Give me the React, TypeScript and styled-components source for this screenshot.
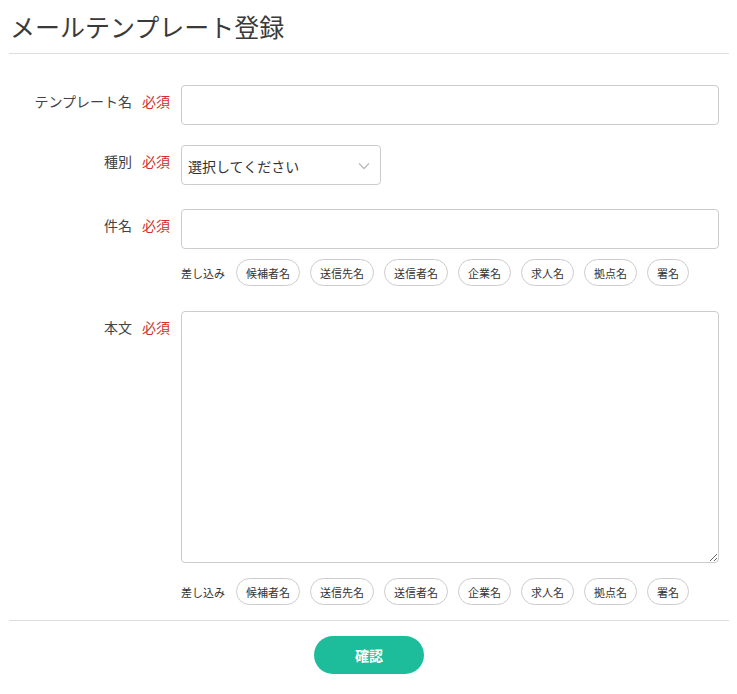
import React from 'react';
import styled, { createGlobalStyle } from 'styled-components';

const GlobalStyle = createGlobalStyle`
  body {
    margin: 0;
    background: #fff;
    font-family: "Noto Sans CJK JP", "Noto Sans", sans-serif;
    color: #333;
  }
`;

const Page = styled.div`
  width: 720px;
  padding: 0 8px 0 9px;
`;

const Title = styled.h1`
  margin: 0;
  padding: 8px 1px 8px;
  font-size: 25px;
  line-height: 37px;
  font-weight: 400;
  color: #3a3a3a;
  border-bottom: 1px solid #ddd;
`;

const Form = styled.div`
  display: flex;
  flex-direction: column;
  padding-top: 31px;
`;

const Row = styled.div<{ $top?: number }>`
  display: grid;
  grid-template-columns: 161px 1fr;
  column-gap: 11px;
  margin-top: ${(p) => p.$top ?? 0}px;
`;

const Label = styled.div`
  display: flex;
  justify-content: flex-end;
  gap: 10px;
  padding-top: 6px;
  font-size: 14px;
  line-height: 20px;
  color: #444;
`;

const Required = styled.span`
  color: #d0312d;
`;

const TextInput = styled.input`
  box-sizing: border-box;
  width: 538px;
  height: 40px;
  border: 1px solid #ccc;
  border-radius: 4px;
  padding: 0 8px;
  font: inherit;
  font-size: 14px;
  outline: none;
`;

const SelectBox = styled.div`
  box-sizing: border-box;
  width: 200px;
  height: 40px;
  border: 1px solid #ccc;
  border-radius: 4px;
  display: flex;
  align-items: center;
  justify-content: space-between;
  padding: 1px 10px 0 6px;
  font-size: 14px;
  color: #333;
`;

const Body = styled.textarea`
  box-sizing: border-box;
  display: block;
  width: 538px;
  height: 252px;
  border: 1px solid #ccc;
  border-radius: 4px;
  padding: 8px;
  font: inherit;
  font-size: 14px;
  resize: vertical;
  outline: none;
`;

const InsertRow = styled.div<{ $top: number }>`
  display: flex;
  align-items: center;
  gap: 10px;
  margin-top: ${(p) => p.$top}px;
  margin-left: 172px;
  font-size: 11px;
  color: #333;
`;

const InsertLabel = styled.span`
  margin-right: 1px;
`;

const Chip = styled.button`
  box-sizing: border-box;
  height: 27px;
  padding: 0 9px;
  border: 1px solid #ccc;
  border-radius: 14px;
  background: #fff;
  font: inherit;
  font-size: 11px;
  color: #333;
  cursor: pointer;
`;

const Footer = styled.div`
  margin-top: 15px;
  border-top: 1px solid #ddd;
  padding-top: 15px;
  display: flex;
  justify-content: center;
`;

const Submit = styled.button`
  width: 110px;
  height: 38px;
  border: none;
  border-radius: 19px;
  background: #1dbd9c;
  color: #fff;
  font: inherit;
  font-size: 14px;
  font-weight: 700;
  cursor: pointer;
`;

const chips = ['候補者名', '送信先名', '送信者名', '企業名', '求人名', '拠点名', '署名'];

const Inserts = ({ top }: { top: number }) => (
  <InsertRow $top={top}>
    <InsertLabel>差し込み</InsertLabel>
    {chips.map((c) => (
      <Chip key={c}>{c}</Chip>
    ))}
  </InsertRow>
);

const Chevron = () => (
  <svg width="12" height="8" viewBox="0 0 12 8" fill="none">
    <path d="M1 1.5 L6 6.5 L11 1.5" stroke="#bbb" strokeWidth="1.4" />
  </svg>
);

export default function App() {
  return (
    <Page>
      <GlobalStyle />
      <Title>メールテンプレート登録</Title>
      <Form>
        <Row>
          <Label>
            テンプレート名<Required>必須</Required>
          </Label>
          <TextInput />
        </Row>
        <Row $top={20}>
          <Label>
            種別<Required>必須</Required>
          </Label>
          <SelectBox>
            <span>選択してください</span>
            <Chevron />
          </SelectBox>
        </Row>
        <Row $top={24}>
          <Label>
            件名<Required>必須</Required>
          </Label>
          <TextInput />
        </Row>
        <Inserts top={10} />
        <Row $top={25}>
          <Label>
            本文<Required>必須</Required>
          </Label>
          <div>
            <Body />
          </div>
        </Row>
        <Inserts top={15} />
      </Form>
      <Footer>
        <Submit>確認</Submit>
      </Footer>
    </Page>
  );
}
